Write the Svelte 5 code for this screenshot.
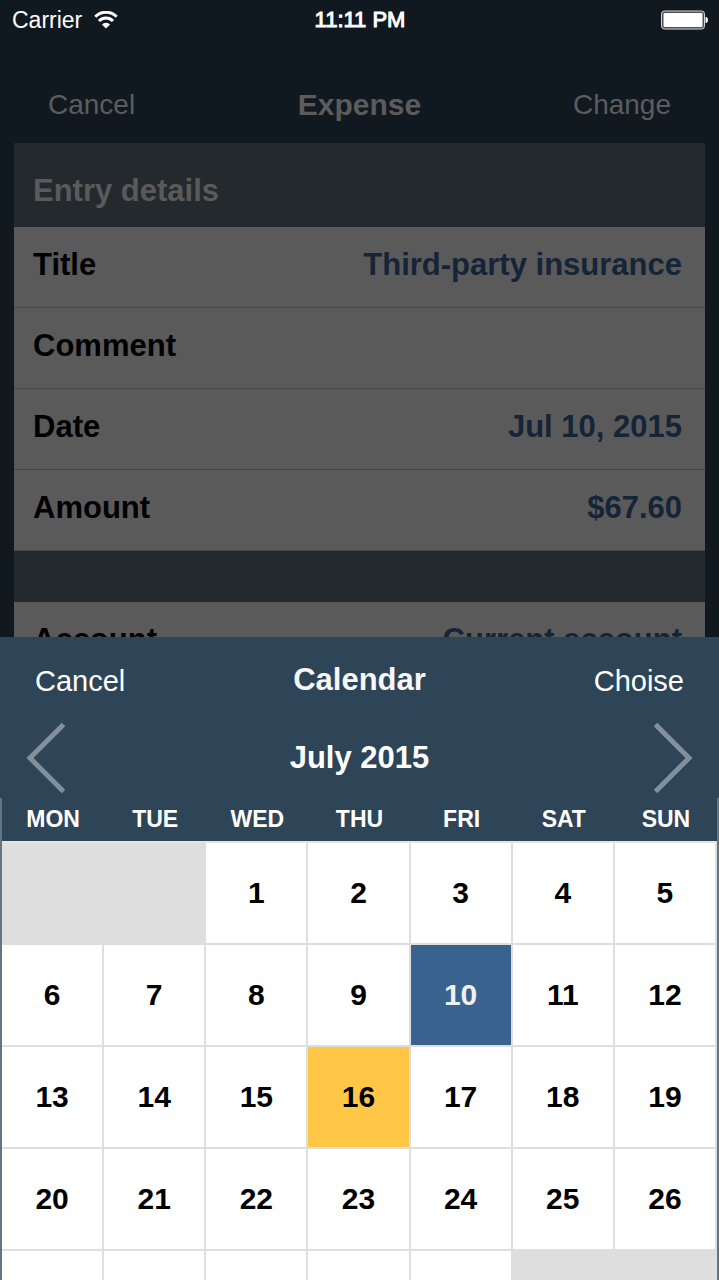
<script>
  const entry = [
    { label: 'Title', value: 'Third-party insurance' },
    { label: 'Comment', value: '' },
    { label: 'Date', value: 'Jul 10, 2015' },
    { label: 'Amount', value: '$67.60' }
  ];
  const account = [{ label: 'Account', value: 'Current account' }];
  const weekdays = ['MON', 'TUE', 'WED', 'THU', 'FRI', 'SAT', 'SUN'];
  const today = 16;
  const firstOffset = 2;
  const daysInMonth = 31;

  let selected = $state(10);

  const weeks = [];
  for (let w = 0; w * 7 < firstOffset + daysInMonth; w++) {
    weeks.push(
      weekdays.map((_, i) => {
        const day = w * 7 + i - firstOffset + 1;
        return day >= 1 && day <= daysInMonth ? day : null;
      })
    );
  }
</script>

{#snippet rows(items)}
  <dl class="rows">
    {#each items as item}
      <div class="row">
        <dt>{item.label}</dt>
        <dd>{item.value}</dd>
      </div>
    {/each}
  </dl>
{/snippet}

<div class="screen">
  <div class="page">
    <div class="status">
      <div class="carrier">
        <span>Carrier</span>
        <svg class="wifi" viewBox="0 0 24 18" aria-hidden="true">
          <path d="M1.300 5.800A15 15 0 0 1 22.700 5.800" />
          <path d="M5 10A9.700 9.700 0 0 1 19 10" />
          <path class="dot" d="M12 17.400L7.900 13.400A5.800 5.800 0 0 1 16.100 13.400Z" />
        </svg>
      </div>
      <time>11:11 PM</time>
      <svg class="battery" viewBox="0 0 48 20" aria-hidden="true">
        <rect class="case" x="1.5" y="1" width="43" height="18" rx="3" />
        <rect class="charge" x="3.5" y="3" width="39" height="14" rx="1" />
        <path class="charge" d="M45.5 7H46.5Q48 7.800 48 10Q48 12.200 46.500 13H45.500Z" />
      </svg>
    </div>
    <header class="nav">
      <button type="button">Cancel</button>
      <h1>Expense</h1>
      <button type="button">Change</button>
    </header>
    <main class="form">
      <h2>Entry details</h2>
      {@render rows(entry)}
      <div class="gap"></div>
      {@render rows(account)}
    </main>
  </div>

  <section class="sheet" aria-label="Calendar">
    <header class="bar">
      <button type="button">Cancel</button>
      <h2>Calendar</h2>
      <button type="button">Choise</button>
    </header>
    <div class="month">
      <button type="button" aria-label="Previous month">
        <svg viewBox="0 0 40 72" aria-hidden="true"><path d="M37.500 2.500L4 36L37.500 69.500" /></svg>
      </button>
      <h3>July 2015</h3>
      <button type="button" aria-label="Next month">
        <svg viewBox="0 0 40 72" aria-hidden="true"><path d="M2.500 2.500L36 36L2.500 69.500" /></svg>
      </button>
    </div>
    <table>
      <thead>
        <tr>
          {#each weekdays as name}
            <th scope="col">{name}</th>
          {/each}
        </tr>
      </thead>
      <tbody>
        {#each weeks as week}
          <tr>
            {#each week as day}
              <td class:blank={!day} class:today={day === today} class:selected={day === selected}>
                {#if day}
                  <button type="button" onclick={() => (selected = day)}>{day}</button>
                {/if}
              </td>
            {/each}
          </tr>
        {/each}
      </tbody>
    </table>
  </section>
</div>

<style>
  :global(body) {
    margin: 0;
    background: #111920;
  }
  .screen {
    height: 100vh;
    overflow: hidden;
    display: flex;
    flex-direction: column;
    font-family: "Liberation Sans", Arial, sans-serif;
    background: #111920;
  }
  h1, h2, h3, dl, dt, dd {
    margin: 0;
  }
  h1, h2, h3 {
    font-size: 31px;
    font-weight: 700;
  }
  button {
    margin: 0;
    padding: 0;
    border: 0;
    background: none;
    color: inherit;
    font: inherit;
    cursor: pointer;
  }

  .page {
    flex: none;
    height: calc(50vh - 3px);
    overflow: hidden;
  }
  .status {
    display: grid;
    grid-template-columns: 1fr auto 1fr;
    align-items: center;
    height: 40px;
    padding: 0 11px 0 12px;
    color: #fff;
    font-size: 23px;
  }
  .status time {
    font-size: 22px;
    -webkit-text-stroke: 1px currentColor;
  }
  .carrier {
    display: flex;
    align-items: center;
    gap: 12px;
  }
  .wifi {
    width: 24px;
    height: 18px;
    fill: none;
    stroke: #fff;
    stroke-width: 3;
  }
  .wifi .dot {
    fill: #fff;
    stroke: none;
  }
  .battery {
    justify-self: end;
    width: 48px;
    height: 20px;
  }
  .case {
    fill: #4a5056;
    stroke: #d5d7d9;
    stroke-width: 1;
  }
  .charge {
    fill: #fff;
  }

  .nav {
    display: grid;
    grid-template-columns: 1fr auto 1fr;
    align-items: center;
    height: 77px;
    padding: 26px 48px 0;
    color: #5c5c5c;
    font-size: 28px;
  }
  .nav h1 {
    font-size: 30px;
  }
  .nav button:first-child, .bar button:first-child {
    justify-self: start;
  }
  .nav button:last-child, .bar button:last-child {
    justify-self: end;
  }

  .form {
    margin: 0 14px;
    background: #24292d;
    font-size: 31px;
  }
  .form h2 {
    padding: 28px 19px 16px;
    line-height: 40px;
    color: #5a5a5a;
  }
  .row {
    display: flex;
    justify-content: space-between;
    height: 80px;
    padding: 0 23px 0 19px;
    background: #5a5a5a;
    border-bottom: 1px solid #474747;
    line-height: 76px;
    font-weight: 700;
  }
  dt {
    color: #000;
  }
  dd {
    color: #152437;
  }
  .gap {
    height: 51px;
  }

  .sheet {
    flex: none;
    background: #2e4558;
    color: #fff;
  }
  .bar {
    display: grid;
    grid-template-columns: 1fr auto 1fr;
    align-items: center;
    height: 86px;
    padding: 0 35px;
    font-size: 29px;
  }
  .bar button {
    padding-top: 2px;
  }
  .bar h2 {
    color: #f7f7f7;
  }
  .month {
    display: flex;
    align-items: center;
    justify-content: space-between;
    height: 70px;
    padding: 0 26px 5px;
  }
  .month svg {
    display: block;
    width: 40px;
    height: 72px;
    fill: none;
    stroke: #82909b;
    stroke-width: 5;
  }

  table {
    width: 100%;
    table-layout: fixed;
    border-collapse: separate;
    border-spacing: 0;
    border: solid #617585;
    border-width: 0 2px;
  }
  th {
    height: 43px;
    padding: 0;
    border-bottom: 2px solid #e3e3e3;
    font-size: 23px;
    line-height: 43px;
  }
  td {
    height: 100px;
    padding: 0;
    border: solid #dedede;
    border-width: 0 2px 2px 0;
    background: #fff;
    color: #000;
  }
  td button {
    display: block;
    width: 100%;
    height: 100px;
    font-size: 30px;
    font-weight: 700;
  }
  .blank {
    background: #dedede;
  }
  .today {
    background: #ffc745;
  }
  .selected {
    background: #39628f;
    color: #f0f0f0;
  }
</style>
